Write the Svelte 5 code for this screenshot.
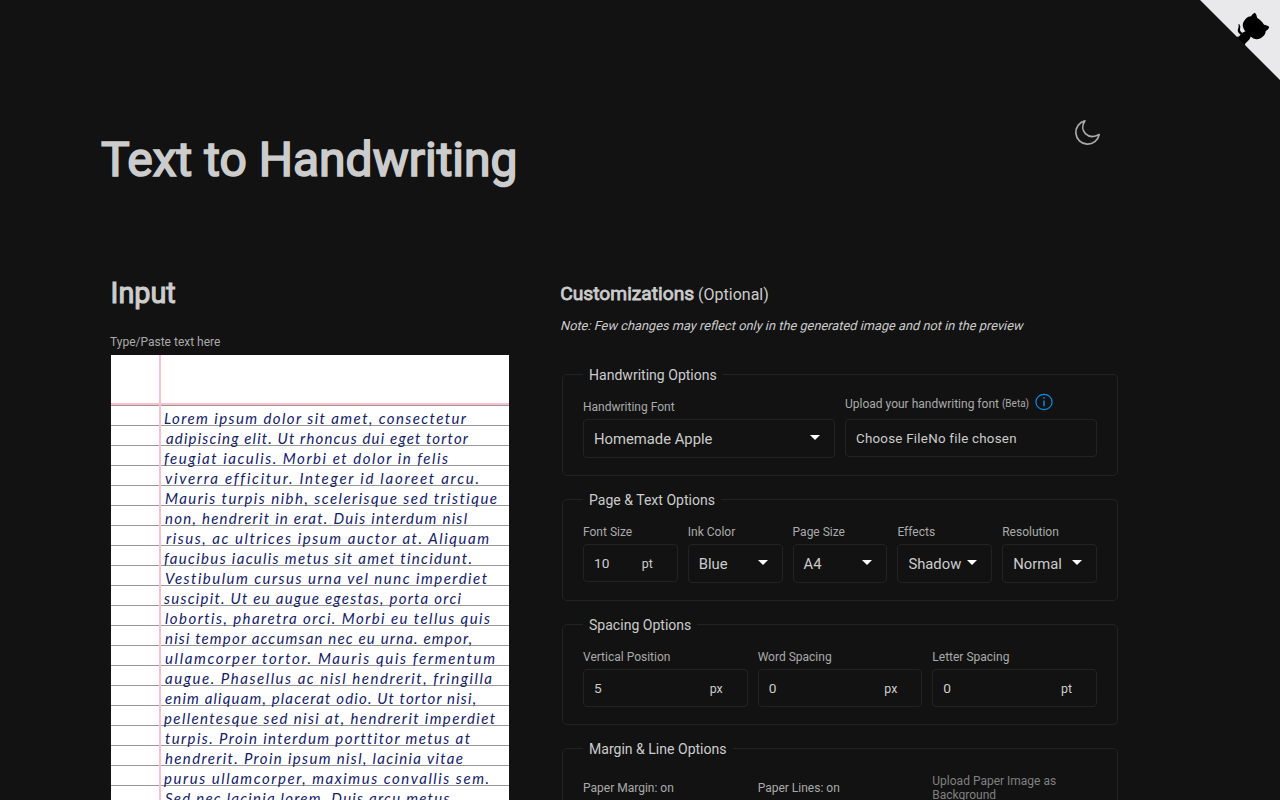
<script>
  const lines = [
    ['Lorem ipsum dolor sit amet, consectetur', 164, 302],
    ['adipiscing elit. Ut rhoncus dui eget tortor', 166, 302],
    ['feugiat iaculis. Morbi et dolor in felis', 164, 284],
    ['viverra efficitur. Integer id laoreet arcu.', 165, 314],
    ['Mauris turpis nibh, scelerisque sed tristique', 165, 332],
    ['non, hendrerit in erat. Duis interdum nisl', 165, 302],
    ['risus, ac ultrices ipsum auctor at. Aliquam', 166, 323],
    ['faucibus iaculis metus sit amet tincidunt.', 164, 308],
    ['Vestibulum cursus urna vel nunc imperdiet', 165, 322],
    ['suscipit. Ut eu augue egestas, porta orci', 164, 297],
    ['lobortis, pharetra orci. Morbi eu tellus quis', 165, 325],
    ['nisi tempor accumsan nec eu urna. empor,', 165, 307],
    ['ullamcorper tortor. Mauris quis fermentum', 165, 330],
    ['augue. Phasellus ac nisl hendrerit, fringilla', 165, 327],
    ['enim aliquam, placerat odio. Ut tortor nisi,', 165, 311],
    ['pellentesque sed nisi at, hendrerit imperdiet', 164, 331],
    ['turpis. Proin interdum porttitor metus at', 165, 305],
    ['hendrerit. Proin ipsum nisl, lacinia vitae', 165, 298],
    ['purus ullamcorper, maximus convallis sem.', 164, 325],
    ['Sed nec lacinia lorem. Duis arcu metus,', 165, 289]
  ];

  const pageOptions = [
    { label: 'Font Size', value: '10', unit: 'pt' },
    { label: 'Ink Color', value: 'Blue' },
    { label: 'Page Size', value: 'A4' },
    { label: 'Effects', value: 'Shadow' },
    { label: 'Resolution', value: 'Normal' }
  ];
  const spacingOptions = [
    { label: 'Vertical Position', value: '5', unit: 'px' },
    { label: 'Word Spacing', value: '0', unit: 'px' },
    { label: 'Letter Spacing', value: '0', unit: 'pt' }
  ];
</script>

{#snippet field(f)}
  <div class="field">
    <span class="label">{f.label}</span>
    {#if f.unit}
      <div class="control number"><span>{f.value}</span><span class="unit">{f.unit}</span></div>
    {:else}
      <div class="control select">
        <span>{f.value}</span>
        <svg class="caret" width="10" height="5" viewBox="0 0 10 5"><path d="M0 0H10L5 5Z" fill="#fff" /></svg>
      </div>
    {/if}
  </div>
{/snippet}

<div class="page">
  <a class="corner" href="#github" aria-label="GitHub">
    <svg width="80" height="80" viewBox="0 0 250 250">
      <path fill="#e9e9eb" d="M0,0 L115,115 L130,115 L142,142 L250,250 L250,0 Z" />
      <path d="M128.3,109.0 C113.8,99.7 119.0,89.6 119.0,89.6 C122.0,82.7 120.5,78.6 120.5,78.6 C119.2,72.0 123.4,76.3 123.4,76.3 C127.3,80.9 125.5,87.3 125.5,87.3 C122.9,97.6 130.6,101.9 134.4,103.2" />
      <path d="M115.0,115.0 C114.9,115.1 118.7,116.5 119.8,115.4 L133.7,101.6 C136.9,99.2 139.9,98.4 142.2,98.6 C133.8,88.0 127.5,74.4 143.8,58.0 C148.5,53.4 154.0,51.2 159.7,51.0 C160.3,49.4 163.2,43.6 171.4,40.1 C171.4,40.1 176.1,42.5 178.8,56.2 C183.1,58.6 187.2,61.8 190.9,65.4 C194.5,69.0 197.7,73.2 200.1,77.6 C213.8,80.2 216.3,84.9 216.3,84.9 C212.7,93.1 206.9,96.0 205.4,96.6 C205.1,102.4 203.0,107.8 198.3,112.5 C181.9,128.9 168.3,122.5 157.7,114.1 C157.9,116.9 156.7,120.9 152.7,124.9 L141.0,136.5 C139.8,137.7 141.6,141.9 141.8,141.8 Z" />
    </svg>
  </a>

  <header>
    <h1>Text to Handwriting</h1>
    <svg class="moon" width="27" height="27" viewBox="0 0 27 27" fill="none" stroke="#aaa" stroke-width="1.7" stroke-linejoin="round">
      <path d="M10.9 1.8A11.8 11.8 0 1 0 25.2 15.6C14 21.4 4.4 11.8 10.9 1.8Z" />
    </svg>
  </header>

  <main>
    <section class="input">
      <h2>Input</h2>
      <span class="label">Type/Paste text here</span>
      <div class="paper">
        <div class="top-margin"></div>
        <div class="ruled">
          <svg class="writing" width="398" height="420" viewBox="111 405 398 420">
            {#each lines as [text, x, width], i}
              <text {x} y={423.5 + i * 20} textLength={width} lengthAdjust="spacing">{text}</text>
            {/each}
          </svg>
        </div>
      </div>
    </section>

    <section class="custom">
      <h3><b>Customizations</b> (Optional)</h3>
      <p class="note">Note: Few changes may reflect only in the generated image and not in the preview</p>

      <fieldset>
        <legend>Handwriting Options</legend>
        <div class="row two">
          {@render field({ label: 'Handwriting Font', value: 'Homemade Apple' })}
          <div class="field upload">
            <span class="label">
              Upload your handwriting font <small>(Beta)</small>
              <svg class="info" width="18" height="18" viewBox="0 0 18 18" fill="none" stroke="#0a8fe6">
                <ellipse cx="9" cy="9" rx="8.1" ry="7.6" stroke-width="1.2" />
                <path d="M9 7.4V13.2M9 4.2V5.8" stroke-width="1.4" />
              </svg>
            </span>
            <div class="control file">Choose FileNo file chosen</div>
          </div>
        </div>
      </fieldset>

      <fieldset>
        <legend>Page &amp; Text Options</legend>
        <div class="row five">
          {#each pageOptions as f}{@render field(f)}{/each}
        </div>
      </fieldset>

      <fieldset class="spacing">
        <legend>Spacing Options</legend>
        <div class="row three">
          {#each spacingOptions as f}{@render field(f)}{/each}
        </div>
      </fieldset>

      <fieldset>
        <legend>Margin &amp; Line Options</legend>
        <div class="row three toggles">
          <span class="label">Paper Margin: on</span>
          <span class="label">Paper Lines: on</span>
          <span class="label dim">Upload Paper Image as Background</span>
        </div>
      </fieldset>
    </section>
  </main>
</div>

<style>
  :global(body) {
    background: #121212;
    overflow: hidden;
  }
  .page {
    height: 800px;
    overflow: hidden;
    background: #121212;
    color: #ccc;
    font-family: Roboto, sans-serif;
  }
  .corner {
    position: absolute;
    top: 0;
    right: 0;
    height: 80px;
    color: #000;
  }
  header {
    display: flex;
    justify-content: space-between;
    align-items: flex-start;
    height: 146px;
    padding: 119px 179px 0 101px;
  }
  h1,
  h2,
  h3 {
    margin: 0;
    font-weight: 400;
  }
  h1 {
    margin-top: 13px;
    font-size: 48px;
    line-height: 56px;
    -webkit-text-stroke: 1.7px #ccc;
  }
  main {
    display: grid;
    grid-template-columns: 400px 560px;
    gap: 50px;
    padding: 0 110px;
  }
  h2 {
    margin: 11px 0 0 0.6px;
    font-size: 28.8px;
    line-height: 34px;
    -webkit-text-stroke: 1.1px #ccc;
  }
  .label {
    display: block;
    font-size: 12px;
    line-height: 14px;
    color: #aaa;
  }
  .input > .label {
    margin-top: 25px;
  }
  .paper {
    position: relative;
    width: 398px;
    height: 500px;
    margin: 6px 0 0 1px;
    background: #fff;
  }
  .paper::after {
    content: '';
    position: absolute;
    top: 0;
    bottom: 0;
    left: 48px;
    width: 2px;
    background: pink;
  }
  .top-margin {
    box-sizing: border-box;
    height: 50px;
    border-bottom: 2px solid pink;
  }
  .ruled {
    height: 450px;
    background: repeating-linear-gradient(#999 0 1px, #fff 1px 20px);
  }
  .writing {
    display: block;
    font: italic 400 15px Lato, sans-serif;
    font-variant-ligatures: none;
    fill: #13206a;
  }
  h3 {
    margin: 17px 0 0 0.3px;
    font-size: 16px;
    line-height: 24px;
  }
  h3 b {
    font-size: 19.2px;
    font-weight: 400;
    -webkit-text-stroke: 0.8px #ccc;
  }
  .note {
    width: max-content;
    margin: 11px 0 32px;
    font-size: 12.8px;
    line-height: 16px;
    transform: skewX(-14deg);
    transform-origin: 0 12px;
  }
  fieldset {
    box-sizing: border-box;
    width: 556px;
    height: 110px;
    margin: 0 0 15px 2px;
    padding: 0 20px;
    border: 1px solid #232323;
    border-radius: 5px;
  }
  .spacing {
    height: 109px;
  }
  legend {
    padding: 1px 6px 0;
    font-size: 14.05px;
    line-height: 16px;
  }
  .row {
    display: grid;
    gap: 10px;
    padding-top: 17px;
  }
  .two {
    grid-template-columns: repeat(2, 1fr);
  }
  .five {
    grid-template-columns: repeat(5, 1fr);
  }
  .three {
    grid-template-columns: repeat(3, 1fr);
  }
  .control {
    box-sizing: border-box;
    display: flex;
    align-items: center;
    height: 38px;
    margin-top: 5px;
    padding: 0 10px;
    border: 1px solid #232323;
    border-radius: 4px;
    font-size: 13.333px;
    letter-spacing: 0.25px;
    white-space: nowrap;
  }
  .select {
    height: 39px;
    padding-right: 14px;
    justify-content: space-between;
    font-size: 14.8px;
    letter-spacing: 0;
  }
  .select span {
    padding-top: 1px;
  }
  .number {
    padding-right: 24px;
    justify-content: space-between;
    font-size: 13.7px;
    letter-spacing: 0;
  }
  .unit {
    font-size: 12.4px;
  }
  .caret {
    flex: none;
    margin-top: -2px;
  }
  .upload .label {
    display: flex;
    align-items: center;
    height: 14px;
    margin-top: -3px;
    white-space: pre;
  }
  .upload .control {
    margin-top: 8px;
  }
  small {
    font-size: 10px;
  }
  .info {
    margin: -4px 0 0 6px;
  }
  .toggles {
    align-items: center;
  }
  .toggles .dim {
    color: #808080;
  }
</style>
